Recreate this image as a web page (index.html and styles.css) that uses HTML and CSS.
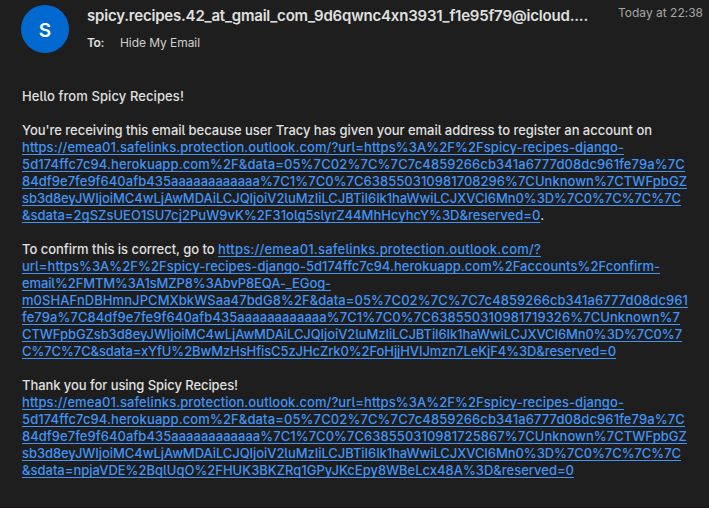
FILE: index.html
```html
<!DOCTYPE html>
<html lang="en">
<head>
<meta charset="utf-8">
<title>Spicy Recipes</title>
<link rel="stylesheet" href="styles.css">
</head>
<body>
<main class="mail">
<header class="head">
<div class="avatar">S</div>
<div class="meta">
<div class="top"><h1 class="sender"><span data-w="501">spicy.recipes.42_at_gmail_com_9d6qwnc4xn3931_f1e95f79@icloud....</span></h1><time class="date"><span data-w="85">Today at 22:38</span></time></div>
<div class="to"><b class="label"><span data-w="17">To:</span></b><span data-w="80">Hide My Email</span></div>
</div>
</header>
<article class="body">
<p><span data-w="162">Hello from Spicy Recipes!</span></p>
<p><span data-w="630">You're receiving this email because user Tracy has given your email address to register an account on</span><br>
<a><span data-w="602">https://emea01.safelinks.protection.outlook.com/?url=https%3A%2F%2Fspicy-recipes-django-</span><br>
<span data-w="663">5d174ffc7c94.herokuapp.com%2F&amp;data=05%7C02%7C%7C7c4859266cb341a6777d08dc961fe79a%7C</span><br>
<span data-w="665">84df9e7fe9f640afb435aaaaaaaaaaaa%7C1%7C0%7C638550310981708296%7CUnknown%7CTWFpbGZ</span><br>
<span data-w="659">sb3d8eyJWIjoiMC4wLjAwMDAiLCJQIjoiV2luMzIiLCJBTiI6Ik1haWwiLCJXVCI6Mn0%3D%7C0%7C%7C%7C</span><br>
<span data-w="518">&amp;sdata=2gSZsUEO1SU7cj2PuW9vK%2F31olg5slyrZ44MhHcyhcY%3D&amp;reserved=0</span></a>.</p>
<p><span data-w="196">To confirm this is correct, go to&nbsp;</span><a><span data-w="323">https://emea01.safelinks.protection.outlook.com/?</span><br>
<span data-w="638">url=https%3A%2F%2Fspicy-recipes-django-5d174ffc7c94.herokuapp.com%2Faccounts%2Fconfirm-</span><br>
<span data-w="309">email%2FMTM%3A1sMZP8%3AbvP8EQA-_EGog-</span><br>
<span data-w="666">m0SHAFnDBHmnJPCMXbkWSaa47bdG8%2F&amp;data=05%7C02%7C%7C7c4859266cb341a6777d08dc961</span><br>
<span data-w="658">fe79a%7C84df9e7fe9f640afb435aaaaaaaaaaaa%7C1%7C0%7C638550310981719326%7CUnknown%7</span><br>
<span data-w="660">CTWFpbGZsb3d8eyJWIjoiMC4wLjAwMDAiLCJQIjoiV2luMzIiLCJBTiI6Ik1haWwiLCJXVCI6Mn0%3D%7C0%7</span><br>
<span data-w="594">C%7C%7C&amp;sdata=xYfU%2BwMzHsHfisC5zJHcZrk0%2FoHjjHVIJmzn7LeKjF4%3D&amp;reserved=0</span></a></p>
<p><span data-w="216">Thank you for using Spicy Recipes!</span><br>
<a><span data-w="602">https://emea01.safelinks.protection.outlook.com/?url=https%3A%2F%2Fspicy-recipes-django-</span><br>
<span data-w="663">5d174ffc7c94.herokuapp.com%2F&amp;data=05%7C02%7C%7C7c4859266cb341a6777d08dc961fe79a%7C</span><br>
<span data-w="665">84df9e7fe9f640afb435aaaaaaaaaaaa%7C1%7C0%7C638550310981725867%7CUnknown%7CTWFpbGZ</span><br>
<span data-w="659">sb3d8eyJWIjoiMC4wLjAwMDAiLCJQIjoiV2luMzIiLCJBTiI6Ik1haWwiLCJXVCI6Mn0%3D%7C0%7C%7C%7C</span><br>
<span data-w="552">&amp;sdata=npjaVDE%2BqlUqO%2FHUK3BKZRq1GPyJKcEpy8WBeLcx48A%3D&amp;reserved=0</span></a></p>
</article>
</main>
<script src="fit.js"></script>
</body>
</html>
```
FILE: styles.css
```css
* { box-sizing: border-box; }
body {
  margin: 0;
  background: #1e1e1e;
  color: #e0e0e0;
  font-family: Inter, "Liberation Sans", sans-serif;
}
.mail {
  height: 508px;
  overflow: hidden;
  padding: 5px 6px 0 21px;
  border-bottom: 1px solid #1a1218;
}
.head {
  display: flex;
  height: 83px;
}
.avatar {
  width: 48px;
  height: 48px;
  border-radius: 50%;
  background: #0069d0;
  color: #fff;
  font-size: 19px;
  font-weight: 600;
  line-height: 51px;
  text-align: center;
}
.meta {
  flex: 1;
  margin-left: 18px;
  white-space: nowrap;
}
.top {
  display: flex;
  justify-content: space-between;
  height: 29px;
}
.sender {
  margin: 0;
  font-size: 15px;
  font-weight: 600;
  line-height: 22px;
}
.date {
  font-size: 12px;
  line-height: 16px;
  color: #a6a6a6;
}
.to {
  display: flex;
  gap: 16px;
  font-size: 12px;
  line-height: 17px;
  color: #cfcfcf;
}
.label {
  font-weight: 600;
  color: #e0e0e0;
}
.body {
  padding-left: 1px;
  font-size: 13px;
  font-weight: 500;
  line-height: 17px;
  font-feature-settings: "cv05", "calt" 0;
  white-space: nowrap;
}
.body p { margin: 0 0 17px; }
.body a {
  color: #4094f7;
  text-decoration: underline;
  text-decoration-thickness: 1px;
  text-underline-offset: 2px;
  text-decoration-skip-ink: none;
}
```
FILE: fit.js
```js
// Tracks each line of text to its set measure.
document.querySelectorAll("[data-w]").forEach((el) => {
  const gap = Number(el.dataset.w) - el.getBoundingClientRect().width;
  el.style.letterSpacing = gap / el.textContent.length + "px";
});
```
